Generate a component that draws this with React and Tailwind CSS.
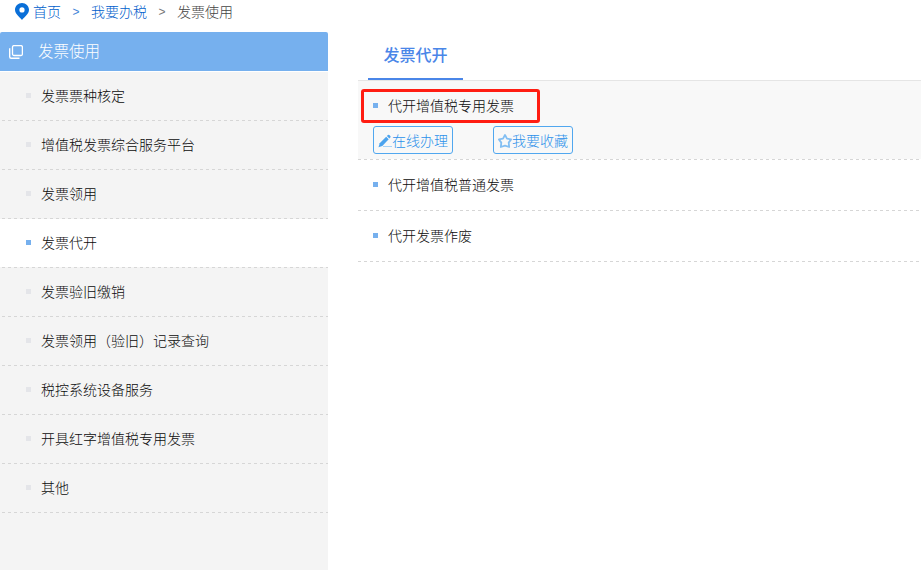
import React from "react";
import clsx from "clsx";

const menuItems = [
  "发票票种核定",
  "增值税发票综合服务平台",
  "发票领用",
  "发票代开",
  "发票验旧缴销",
  "发票领用（验旧）记录查询",
  "税控系统设备服务",
  "开具红字增值税专用发票",
  "其他",
];

const PinIcon = () => (
  <svg className="w-[14px] h-[17px] shrink-0" viewBox="0 0 14 17">
    <path
      fill="#0a6fd8"
      fillRule="evenodd"
      d="M7 0C3.1 0 0 3 0 6.8C0 11.2 4.6 13.8 7 17C9.4 13.8 14 11.2 14 6.8C14 3 10.9 0 7 0ZM7 4.3A2.6 2.6 0 1 1 7 9.5A2.6 2.6 0 0 1 7 4.3Z"
    />
  </svg>
);

const CopyIcon = () => (
  <svg className="w-[14px] h-[14px] shrink-0" viewBox="0 0 14 14" fill="none" stroke="#fff">
    <rect x="3.5" y="0.6" width="9.9" height="9.9" rx="1.5" strokeWidth="1.3" />
    <path d="M0.7 3.3V11.8Q0.7 13.3 2.2 13.3H10.5" strokeWidth="1.4" />
  </svg>
);

const PencilIcon = () => (
  <svg className="w-[14px] h-[14px] mt-0.5 shrink-0" viewBox="0 0 14 14">
    <path fill="#4ba3ee" d="M0.5 13.2L1.7 9.3L8.2 2.8L10.7 5.3L4.3 11.9Z" />
    <path fill="#4ba3ee" d="M8.9 2.1L9.9 1.1Q10.6 0.4 11.3 1.1L12.3 2.1Q13 2.8 12.3 3.6L11.3 4.6Z" />
    <path stroke="#a9d2f6" d="M5 12.5H14" />
  </svg>
);

const StarIcon = () => (
  <svg className="w-[14px] h-[14px] mt-0.5 shrink-0" viewBox="0 0 14 14" fill="none" stroke="#83bff3" strokeLinejoin="round">
    <path
      strokeWidth="1.8"
      d="M7 1L9 4.6L13.1 5.4L10.7 8.6L11.2 13L7 11.6L2.8 13L3.3 8.6L0.9 5.4L5 4.6Z"
    />
  </svg>
);

const DashedLine = () => (
  <div className="h-px bg-[repeating-linear-gradient(to_right,#d6d6d6_0px,#d6d6d6_3px,transparent_3px,transparent_6px)]" />
);

const Bullet = ({ active }) => (
  <span className={clsx("w-[5px] h-[5px] shrink-0", active ? "bg-[#76b0ee]" : "bg-[#e4e5e9]")} />
);

const ActionButton = ({ icon, label }) => (
  <button className="w-20 h-7 pl-1 flex items-center border border-[#50a7ef] rounded-[3px] text-sm leading-none text-[#2b90ea] whitespace-nowrap">
    {icon}
    <span>{label}</span>
  </button>
);

const Breadcrumb = () => (
  <nav className="h-8 pl-[15px] pt-[3px] flex items-start text-sm leading-4 text-[#0060cc]">
    <PinIcon />
    <a className="ml-1">首页</a>
    <span className="w-[30px] pt-px text-center text-xs leading-4 text-[#3f86d8] font-normal font-['Liberation_Sans']">&gt;</span>
    <a>我要办税</a>
    <span className="w-[30px] pt-px text-center text-xs leading-4 text-[#777] font-normal font-['Liberation_Sans']">&gt;</span>
    <span className="text-[#444]">发票使用</span>
  </nav>
);

const Sidebar = () => (
  <aside className="w-[328px] shrink-0 flex flex-col">
    <div className="h-[39px] mb-px pl-[9px] flex items-center bg-[#76b0ee] rounded-t-[2px] text-white">
      <CopyIcon />
      <span className="ml-[15px] pb-0.5 text-[15.5px] leading-none">发票使用</span>
    </div>
    <ul className="flex-1 bg-[#f4f4f4]">
      {menuItems.map((item) => {
        const active = item === "发票代开";
        return (
          <li key={item} className={clsx(active && "bg-white")}>
            <div className="h-12 pl-[26px] pb-0.5 flex items-center">
              <Bullet active={active} />
              <span className="ml-[10px] text-sm text-[#0a0a0a]">{item}</span>
            </div>
            <div className="pl-[2px] bg-[#f4f4f4]">
              <DashedLine />
            </div>
          </li>
        );
      })}
    </ul>
  </aside>
);

const ServiceList = () => (
  <main className="flex-1 min-w-0 ml-[30px] text-sm text-[#0a0a0a]">
    <div className="h-[49px] pl-[10px] border-b border-[#e5e5e5]">
      <div className="w-[95px] h-12 pb-0.5 flex items-center justify-center border-b-2 border-[#4a86e8] text-base font-medium text-[#4a86e8]">
        发票代开
      </div>
    </div>
    <div className="h-[78px] pt-2 pl-[3px] bg-[#f8f8f8]">
      <div className="w-[179px] h-[34px] pl-[9px] pb-0.5 flex items-center border-3 border-[#ff1d12] rounded-[3px]">
        <Bullet active />
        <span className="ml-[10px]">代开增值税专用发票</span>
      </div>
      <div className="mt-[3px] pl-3 flex gap-10">
        <ActionButton icon={<PencilIcon />} label="在线办理" />
        <ActionButton icon={<StarIcon />} label="我要收藏" />
      </div>
    </div>
    <DashedLine />
    {["代开增值税普通发票", "代开发票作废"].map((name) => (
      <div key={name}>
        <div className="h-[50px] pl-[15px] pb-0.5 flex items-center">
          <Bullet active />
          <span className="ml-[10px]">{name}</span>
        </div>
        <DashedLine />
      </div>
    ))}
  </main>
);

export default function App() {
  return (
    <div className="w-[921px] h-[570px] overflow-hidden flex flex-col bg-white font-light font-['Noto_Sans_CJK_SC',sans-serif]">
      <Breadcrumb />
      <div className="flex-1 flex min-h-0">
        <Sidebar />
        <ServiceList />
      </div>
    </div>
  );
}
